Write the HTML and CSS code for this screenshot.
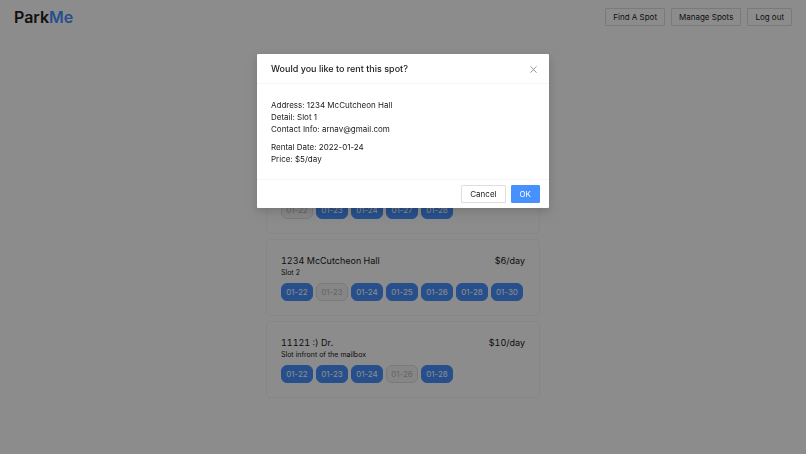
FILE: index.html
```
<!DOCTYPE html>
<html lang="en">
<head>
  <meta charset="UTF-8" />
  <meta name="viewport" content="width=device-width, initial-scale=1.0" />
  <title>ParkMe</title>
  <link rel="stylesheet" href="styles.css">
</head>
<body>
  <header class="navbar">
    <div class="logo">Park<span class="logo-accent">Me</span></div>
    <nav class="nav-buttons">
      <button class="btn">Find A Spot</button>
      <button class="btn">Manage Spots</button>
      <button class="btn">Log out</button>
    </nav>
  </header>

  <main class="spots">
    <section class="spot">
      <div class="spot-top">
        <h2>1234 McCutcheon Hall</h2>
        <span class="price">$5/day</span>
      </div>
      <p class="detail">Slot 1</p>
      <div class="dates">
        <button class="date" disabled>01-22</button>
        <button class="date">01-23</button>
        <button class="date">01-24</button>
        <button class="date">01-27</button>
        <button class="date">01-28</button>
      </div>
    </section>

    <section class="spot">
      <div class="spot-top">
        <h2>1234 McCutcheon Hall</h2>
        <span class="price">$6/day</span>
      </div>
      <p class="detail">Slot 2</p>
      <div class="dates">
        <button class="date">01-22</button>
        <button class="date" disabled>01-23</button>
        <button class="date">01-24</button>
        <button class="date">01-25</button>
        <button class="date">01-26</button>
        <button class="date">01-28</button>
        <button class="date">01-30</button>
      </div>
    </section>

    <section class="spot">
      <div class="spot-top">
        <h2>11121 :) Dr.</h2>
        <span class="price">$10/day</span>
      </div>
      <p class="detail">Slot infront of the mailbox</p>
      <div class="dates">
        <button class="date">01-22</button>
        <button class="date">01-23</button>
        <button class="date">01-24</button>
        <button class="date" disabled>01-26</button>
        <button class="date">01-28</button>
      </div>
    </section>
  </main>

  <div class="modal-mask">
    <div class="modal" role="dialog" aria-modal="true" aria-labelledby="modalTitle">
      <div class="modal-header">
        <h1 id="modalTitle">Would you like to rent this spot?</h1>
        <button class="close" aria-label="Close">
          <svg width="7" height="7" viewBox="0 0 7 7"><path d="M0.5 0.3L6.5 6.7M6.5 0.3L0.5 6.7" fill="none" stroke="currentColor" stroke-width="0.9" /></svg>
        </button>
      </div>
      <div class="modal-body">
        <p>Address: 1234 McCutcheon Hall<br>Detail: Slot 1<br>Contact Info: arnav@gmail.com</p>
        <p>Rental Date: 2022-01-24<br>Price: $5/day</p>
      </div>
      <div class="modal-footer">
        <button class="btn">Cancel</button>
        <button class="btn btn-primary">OK</button>
      </div>
    </div>
  </div>
</body>
</html>
```

FILE: styles.css
```
* {
  box-sizing: border-box;
}
body {
  margin: 0;
  background: #fff;
  color: #202020;
  font-family: Inter, "Liberation Sans", sans-serif;
  font-size: 8px;
  line-height: 12px;
}
h1, h2, p {
  margin: 0;
  font-weight: 400;
}
button {
  font-family: inherit;
  font-size: 8px;
  line-height: 12px;
  cursor: pointer;
}
.navbar {
  display: flex;
  justify-content: space-between;
  align-items: center;
  padding: 8px 14px;
}
.logo {
  font-size: 16px;
  line-height: 18px;
  font-weight: 600;
}
.logo-accent {
  color: #4791ff;
}
.nav-buttons {
  display: flex;
  gap: 6px;
}
.btn {
  height: 18px;
  padding: 0 8px;
  background: #fff;
  color: #202020;
  border: 1px solid #dedede;
  border-radius: 1px;
}
.nav-buttons .btn {
  padding: 0 7px;
}
.btn-primary {
  background: #4791ff;
  border-color: #4791ff;
  color: #fff;
}
.spots {
  display: flex;
  flex-direction: column;
  gap: 5px;
  width: 34%;
  min-width: 273px;
  margin: 0 auto;
  padding: 123px 0 56px;
}
.spot {
  padding: 14px;
  border: 1px solid #f5f5f5;
  border-radius: 5px;
}
.spot-top {
  display: flex;
  justify-content: space-between;
  font-size: 9px;
  line-height: 13px;
  font-variant-numeric: tabular-nums;
}
.spot-top h2 {
  font-size: 9px;
}
.detail {
  font-size: 7px;
  line-height: 12px;
}
.dates {
  display: flex;
  gap: 3px;
  padding-top: 4px;
}
.date {
  width: 32px;
  height: 18px;
  padding: 0;
  background: #4791ff;
  border: 1px solid #4791ff;
  border-radius: 6px;
  color: #fff;
}
.date:disabled {
  background: #f5f5f5;
  border-color: #dedede;
  color: #b8b8b8;
  cursor: default;
}
.modal-mask {
  position: fixed;
  inset: 0;
  padding-top: 54px;
  background: rgba(0, 0, 0, 0.45);
}
.modal {
  width: 292px;
  margin: 0 auto;
  background: #fff;
  border-radius: 1px;
  box-shadow: 0 3px 9px rgba(0, 0, 0, 0.12), 0 5px 16px 4px rgba(0, 0, 0, 0.05);
}
.modal-header {
  display: flex;
  justify-content: space-between;
  align-items: center;
  padding: 9px 12px 8px 14px;
  border-bottom: 1px solid #f5f5f5;
}
.modal-header h1 {
  font-size: 9px;
  line-height: 12px;
  font-weight: 500;
}
.close {
  display: flex;
  padding: 0;
  border: none;
  background: none;
  color: #8c8c8c;
}
.modal-body {
  padding: 15px 14px 14px;
}
.modal-body p + p {
  margin-top: 6px;
}
.modal-footer {
  display: flex;
  justify-content: flex-end;
  gap: 5px;
  padding: 5px 9px;
  border-top: 1px solid #f5f5f5;
}
```
